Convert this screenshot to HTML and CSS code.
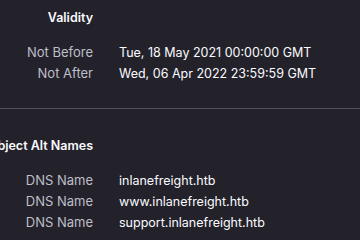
FILE: index.html
```html
<!DOCTYPE html>
<html lang="en">
<head>
    <meta charset="UTF-8">
    <title>Certificate</title>
    <link rel="stylesheet" href="styles.css">
</head>
<body>

<!-- Validity -->
<div class="section first">
    <div class="row head">
        <span class="label">Validity</span>
    </div>
    <div class="rows">
        <div class="row"><span class="label">Not Before</span><span class="value">Tue, 18 May 2021 00:00:00 GMT</span></div>
        <div class="row"><span class="label">Not After</span><span class="value">Wed, 06 Apr 2022 23:59:59 GMT</span></div>
    </div>
</div>

<!-- Subject Alt Names -->
<div class="section">
    <div class="row head">
        <span class="label">Subject Alt Names</span>
    </div>
    <div class="rows">
        <div class="row"><span class="label">DNS Name</span><span class="value">inlanefreight.htb</span></div>
        <div class="row"><span class="label">DNS Name</span><span class="value">www.inlanefreight.htb</span></div>
        <div class="row"><span class="label">DNS Name</span><span class="value">support.inlanefreight.htb</span></div>
    </div>
</div>

</body>
</html>
```

FILE: styles.css
```css
/* Estilo general */
body {
    margin: 0;
    background-color: #23222b;
    color: #fbfbfe;
    font-family: Inter, "Noto Sans", sans-serif;
    font-size: 13px;
    overflow: hidden;
}
.section {
    padding: 27px 0 3px;
    border-top: 1px solid #52525e;
}
.section.first {
    padding: 8px 0 24px;
    border-top: none;
}
.row {
    display: grid;
    grid-template-columns: 93px 1fr;
    column-gap: 26px;
    line-height: 21px;
}
.row .label {
    text-align: right;
    color: #bfbfc9;
    white-space: nowrap;
    direction: rtl;
}
.head {
    line-height: 20px;
}
.head .label {
    color: #fbfbfe;
    font-size: 12.5px;
    font-weight: 600;
}
.rows {
    margin-top: 14px;
}
.value {
    font-size: 12.5px;
    white-space: nowrap;
}
```
